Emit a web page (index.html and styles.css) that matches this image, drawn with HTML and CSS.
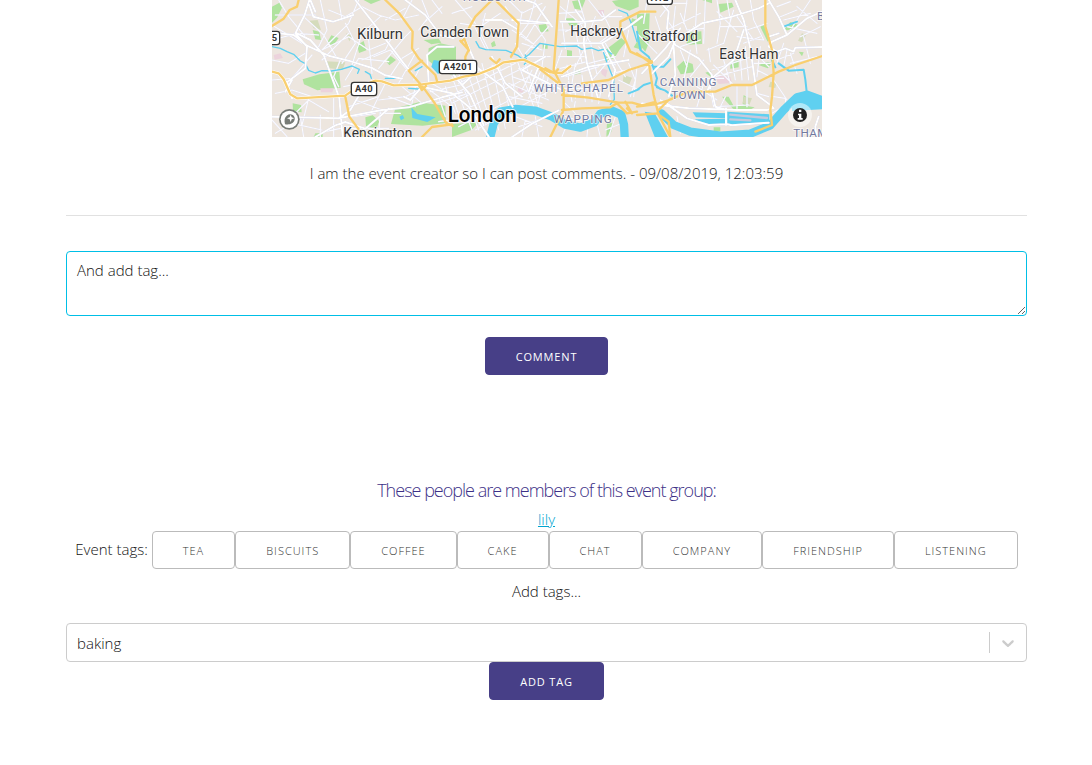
FILE: index.html
```html
<!DOCTYPE html>
<html lang="en">
<head>
<meta charset="utf-8">
<title>Event</title>
<link rel="stylesheet" href="styles.css">
</head>
<body>
<main class="page">
  <svg class="map" viewBox="0 0 1650 411" role="img" aria-label="Map of London">
    <rect class="land" width="1650" height="411"/>
    <!-- parks -->
    <g class="park">
      <path d="M0 20l22-12 8 15-15 30-15 15zM92 238l50-15 60-8 4 48-70 8-40-18zM62 310l25 5 2 22-26-3zM122 90l20 5 5 25-17-2zM165 128l13-22 22 8-17 24zM255 135l20-12 8 28-22 8zM342 184l14-16 16 12-20 16zM280 352l22-6 20 18-10 24-30-10zM130 400h22v11h-27zM275 0h52l-30 12z"/>
      <path d="M370 325l70-18 80 10 2 52-70 8-95-5zM470 145l35-15 47 10v85l-40-5-20-20-25-20zM455 120l45-4 8 12-30 5z"/>
      <path d="M540 145l4 50-4 20h-16v-70zM540 372l80-5-20 22-60 22zM657 130l10-8 5 15-12 5zM900 4l22-4h18l-12 30-20-4zM1020 3l20-3h60v20l-28 12-40-14zM800 75l22-3 8 22-25 3zM880 55l25 0 14 20-25 4zM812 132l15 0v14h-15zM885 150l15 2v18l-15-2zM1000 150l48-36 14 12-20 24-15 25-26 8zM905 212l22-4v12l-20 5zM1005 365l20 5-8 28-14 12zM1080 55l25 8v16l-30-2zM1095 125l15 5v20l-25-8z"/>
      <path d="M1095 42l38-2-3 90-10 25-25-30zM1340 12l40-4 5 12-40 18zM1240 98l48-4 2 38-45 2zM1215 200l20-18 27 10 4 25-40 6zM1300 218l16-5v18zM1375 188l25-8v22l-25 4zM1465 80l10-5 20 35-8 15zM1460 195l28-10 10 5-10 15zM1415 285l12 8v30l-15-12zM1350 290l20 0 15 28 25-2 38 6-20 10-45-6zM1535 90l20-24 28 10-35 15zM1325 382l20 0v12h-20zM1580 155l15 2-5 12zM1290 0h30v10z"/>
    </g>
    <g class="garden"><path d="M112 62l25-2 10 30-22-5zM160 184l60 3-8 22-40-4zM222 100l20 8-10 16zM1055 225l25 8-8 20-20-5zM1590 100l12 5-12 22-12-5zM1415 290l25 5-8 20-20-5zM1495 245l18 3-3 16-20-3z"/></g>
    <g class="pink"><path d="M5 165l20-5 8 14-25 5zM145 265l40 0-4 12-34 0zM740 260l16 5-4 14-15-5zM978 30l18 0v16h-16zM985 205l22 5-6 22-12-10zM1325 226l50 5 5 18-40 3z"/></g>

    <!-- local streets -->
    <g class="street">
      <path d="M0 75L90 130M20 0l30 50 50 60M10 45l120 0M0 120l75-20 65 5M95 50l60 55 40 70M145 0l20 90-25 50M200 0l10 60M260 0l-30 70-80 80M170 30l50 20 50-30 60 30M150 150l80-40 60 40 50-20M210 190l40-60-30-60M230 100l-80 80M240 195l30-95 55-50M270 180l70-30 20-40M220 240l40-65 90 10M300 220l-10-100M320 205l80-95 20-20M350 235l40-60 50-30M380 250l50-90M410 215l-55-65-50 20M0 180l50 10 50-30M0 240l60-5 60-70M10 280l50-10 60 20M60 350l50-50 60 35M85 350l10 61M110 295l-20 80M145 345v66M185 295v115M205 180l-20 50 15 30M215 260l100-20M230 320l90-30 20-40M250 300l80 30M240 350l70-10M300 330l40-80 100 10M320 300l80-10 60-30M325 340l60 0M350 290l80 30M390 260l60 50M420 310l10-50M10 400l50-30 90 20M160 395l70-15M230 385l120 0M325 330l-5 80M0 360l45 50M390 60l30-60M340 60l60-35M320 45l50 15 70-15M450 0l20 50-30 40M480 0l30 40M510 20l-50 45"/>
      <path d="M445 200l-20 40M460 260l80 60M470 245l80 45M475 275l90-20M490 310l100-30M500 290l20 60M520 260l30 80M545 300l20 60M500 365l70-10"/>
    </g>
    <g class="street" transform="translate(540)">
      <path d="M0 40l60-20M10 0l60 70M25 70l60 10 60-40M50 80l-20 40M70 85l30 60M90 60l80 0M100 40l-15 60 25 50M160 20l40 60M170 0l40 40 60-30M200 70l70 0M180 90l60 40M210 35l-10 60 60 50M250 0l-20 70-30 40M240 60l40 60-10 80M280 20l-60 100M290 80l-70 80M210 130l60 20M225 170l70 0M190 130l30 50M320 40l70-5M325 20l60 50 30 60M320 90l80 0M330 65l10 80M350 0l-10 60M380 0l20 65-60 30M370 90l20 100M400 140l-30 60M320 170l80 0M325 205l80-20M330 150l-20 55M345 195l5 45M370 190l-10 60M410 0l40 50 60 0M430 50l-30 80M450 35l30 60M440 130l40-30M415 125l20 100M440 140l50 55M410 190l80-20M425 235l60-70M460 130l60 100M480 220l90-20M500 240l60 30M530 90l-15 80M530 190l20 50-15 50M555 200l-10 90"/>
      <path d="M0 230l60 160M20 220l60 170M45 215l55 155M65 205l60 190M90 190l50 200M120 195l40 190M140 190l40 170M175 180l20 160M195 180l50 140M220 190l40 130M20 250l120-60M10 280l180-90M0 310l220-110M20 340l210-110M20 380l230-120M70 390l210-110M170 250l120 50M180 230l130 45M200 205l90 50M170 290l100 20M240 210l-30 60M265 215l-35 80M275 225l-15 80M290 220l-10 70M305 235l5 45M340 230l100-30M320 265l120 0M350 245l10 60M370 250l0 45M390 225l10 80M420 260v45M450 255l-10 55M470 260l5 45M350 280l110-20M340 310l30 30M370 305l-5 25M340 350l70 20M350 360l-20 50M410 350l-5 60M435 370l10 41M460 390l50-20M470 410l20-60M190 350l80 30M200 380l90-30M220 360l-10 50M250 350l10 60"/>
    </g>
    <g class="street" transform="translate(1095)">
      <path d="M0 100l60 60M30 0l-10 70M55 50l20 60M70 50l30-40 50 0M90 90l100-50M90 60l30 40M115 20l-10 100M130 140l60-20M130 40l20 50 50-5M150 0l-10 70M180 0l-5 90M205 0l-5 130M240 0l10 70-10 60M270 0l10 60M290 30l-30 100M250 80l80 0M240 35l60 60M300 50l50 70M340 0l10 60 30 60M330 90l60-20M300 110l80 10M320 130l50-20M210 150l50-20M170 80l10 80M130 150l20 50M160 150l-20 90M200 180l-40 50M215 145l5 40M225 210l120-40M235 230l110-30M230 195l60 60M260 180l20 70M285 180l10 60M310 170l5 70M335 240l-10-100M350 190l50 0M360 210l40 20M355 160l40 40M370 140l-10 90M180 235l80 0M180 260l60 40M200 250l-20 70M220 270l10 50M265 290l-15 30M300 260l0 65M330 260v60M360 280l35 10M235 320l100-5M410 240l40 60M440 200l10-50M420 180l50-20M460 160l20 60M460 190l80-20M500 110l20 80M420 20l40-15M430 50l50-20M440 60l80-20M450 80l90 20M480 20l60 50M520 0l-60 90M550 80l-60 30M440 130l-20 60M410 290l35 5 2 20-42 25M500 400l50 0M100 395l-10-50M130 400l-10-50"/>
    </g>

    <!-- rivers, docks and canals -->
    <path class="thames" d="M655 411l10-40 20-36 45-8 60 5 50 18 40 24 45 9 42-16 18-26 35-9 28 12 8 30 2 37M1168 340l37 35 50 20 90 12 90-6 60-25 40-46 40-38 30-8 50 18"/>
    <path class="water-fill" d="M1262 337l102 3 0 15-92-3zM1268 358l96-2 0 16-70 0zM1366 335l126 8v28l-126 5zM485 180l16 2 12 30-15 10-20-22zM382 350l10-5 5 10-10 6zM418 322l18 20 55 10-25 14-45-12zM1118 335l30 5 40 71-40 0z"/>
    <path class="dock" d="M1375 344l110 10M1375 358l60 3"/>
    <g class="canal">
      <path d="M0 140l25 5 20 10 20 8 20 20 15 8 10 20 20 8 20-7 28 1 30-5 32-10 22 10-5 12M280 215l14 8 4 12M340 235l30 0M410 265l30 2M430 212l20-12M612 125l10 18 20 6 60 2 35 15 15 12 20-15 32-33 60 10 50-2 15 10 30-4 20 8 20-5 20 15M760 165l5 20-8 8M1040 30l25 10 15 35 15 50M995 158l10 30 12 30 8 20 2 60-12 15"/>
      <path class="canal-wide" d="M1095 95l10 55 25 20 15 35 10 30-5 20 15 12M1145 200l30 0 20-22M1155 262l25 10 20 15M1095 270l20-15 25-8M1070 280l30-12M1520 190l30 22 45-3 5 30 5 45M1500 180l10 22M1535 80l40-15"/>
    </g>
    <path class="thames-head" d="M1560 300l40-28 50 18v38l-90 5z"/>

    <!-- secondary roads -->
    <g class="road">
      <path d="M112 0l-14 45-28 55 35 40-5 65-50 38M112 15l12 35 60 15 60-20M115 0l15 35M0 95l20 5 45 5 40 32 65 30 60 15 70 22 40 22 50 10M75 100l40 20 40 45 35 95 12 35 10 116M250 0l55 70 90 120 25 30M400 0l60 45 45 60 40 10M60 295l-15-50M0 350l200 5 130-25 80-8 100-30 60-15M200 355l35-25 30-50M60 240l-20 35M130 411l60-35 30-10 60 20 70-60M395 290l20 10 35-40 90 20 50 40 60 90M470 245l-5-80 30-25 50 0"/>
      <path d="M545 225l50 60 40 90M580 120l40 90-50 45M640 60l50 0 50 30M612 200l80 60 30 60M660 170l40 80 50 40M720 60l20 0 90 10M760 0l30 10 50 70M820 170l-70 40 130 65M800 200l-30 75M870 230l80-30 120-20M865 65l70 0 55-5 40-30M940 70l-5 60 10 60 35 110M870 130l120 0 80-50 40-30M990 130l40 80-20 80M720 411l60-40 80-40M910 30l30 40"/>
      <path d="M1135 225l55-55 20-50 80-50 90-20 80-25 30-15M1160 0l30 35-5 50 25 50 70 40 40 50-5 40M1110 220l70-75 45-60M1390 0l25 60 20 85 10 70 10 70 40 30 10 10M1415 90l-30 90-60 50-20 45M1205 140l5 85-20 65M1490 0l30 50 25 55-45 20-10 15 25 15 25-10 25 10 5-12 80-2M1520 100l-30 10M1545 105l60-50 45-20M1320 275l10 45 35 10M1110 310l140 15 145 5 90 0 15-5M1195 320l50 35 65 20 55-2 15 3 110-8M1165 300l35 20M1362 325v50M1640 350l-10 30 5 40"/>
    </g>

    <!-- trunk roads -->
    <g class="casing">
      <path d="M0 215l20 5 15 18 20 45 20 12 145-8 30-22 60-23 20 2 35 12 80-2 90-12 40-12 45-8 50-20 25-15 60-8 80 38 35 2 25-20"/>
    </g>
    <g class="trunk">
      <path d="M0 78l35-22 18-26 22-10 5-20M340 0l42 40 40 55-2 50 20 30 50 50 5 18M0 215l20 5 15 18 20 45 20 12 145-8 30-22 60-23 20 2 35 12 80-2 90-12 40-12 45-8 50-20 25-15 60-8 80 38 35 2 25-20M450 182l-40 30 42 48 35 48 35 60 20 10M220 290l12 60 45 61M450 411l30-30 60-8M440 255l10 15 12-12"/>
      <path d="M565 122l25 28-10 20 0 15M590 85l20-35 50-50 20-10M567 125l10-8 14 35M675 5l65 65-5 70-18 30M860 0l-15 210 30 60 0 60-40 81M805 208l65 50M820 205l28 15 10-12M655 175l18 15 10-12M870 285l80 8 90 15 40 0 30 8 40-10M870 330l60-5 85-3 20-12 30 30 30-5M1060 305l20 35-15-15M930 250l80-10 60-30 70-22M1150 35h-45l-60 30 0 20 30 70 65 30M1095 160l35 25 15 100 15 60 35 66M1095 320l60-8 45-15M1095 345l65-5M1160 330l30-30 60-25 80 0 50-20 60 0 80-40 50-20 90-30M1155 340l35 25 5 46M1480 0v80l20 70 5 70-5 70-5 40 5 45-50 20"/>
    </g>

    <!-- place labels -->
    <g class="place">
      <text x="255" y="116" textLength="138" lengthAdjust="spacingAndGlyphs">Kilburn</text>
      <text x="445" y="112" textLength="266" lengthAdjust="spacingAndGlyphs">Camden Town</text>
      <text x="895" y="107" textLength="156" lengthAdjust="spacingAndGlyphs">Hackney</text>
      <text x="1111" y="124" textLength="167" lengthAdjust="spacingAndGlyphs">Stratford</text>
      <text x="1342" y="178" textLength="177" lengthAdjust="spacingAndGlyphs">East Ham</text>
      <text x="214" y="415" textLength="207" lengthAdjust="spacingAndGlyphs">Kensington</text>
    </g>
    <text class="city" x="527" y="365" textLength="207" lengthAdjust="spacingAndGlyphs">London</text>
    <g class="district">
      <text x="572" y="4" textLength="195">HOLLOWAY</text>
      <text x="785" y="276" textLength="268">WHITECHAPEL</text>
      <text x="845" y="368" textLength="174">WAPPING</text>
      <text x="1163" y="259" textLength="170">CANNING</text>
      <text x="1198" y="298" textLength="103">TOWN</text>
      <text x="1564" y="412" textLength="102">THAM</text>
      <text x="1635" y="60">B</text>
    </g>
    <g class="shield">
      <rect x="238" y="247" width="76" height="40" rx="8"/><text x="276" y="277">A40</text>
      <rect x="502" y="181" width="112" height="40" rx="8"/><text x="558" y="211">A4201</text>
      <rect x="1126" y="-27" width="75" height="40" rx="8"/><text x="1163" y="3">A12</text>
      <rect x="-50" y="94" width="73" height="40" rx="8"/><text x="-2" y="124">A5</text>
    </g>
    <g class="logo">
      <circle class="logo-ring" cx="52" cy="358" r="31"/>
      <circle class="logo-face" cx="52" cy="358" r="26"/>
      <path class="logo-mark" d="M39 373c-3-13-1-21 5-26 8-6 17-5 22 2 5 8 1 17-6 21-6 4-13 4-21 3z"/>
      <path class="logo-star" d="M56 344l3 8 8 3-8 3-3 8-3-8-8-3 8-3z"/>
    </g>
    <g class="info">
      <circle class="info-halo" cx="1584" cy="345" r="36"/>
      <circle class="info-disc" cx="1584" cy="345" r="21"/>
      <path class="info-i" d="M1581 329h7v7h-7zM1578 341h10v13h4v5h-15v-5h4v-8h-3z"/>
    </g>
  </svg>

  <p class="comment">I am the event creator so I can post comments. - 09/08/2019, 12:03:59</p>
  <hr class="rule">
  <textarea class="comment-box">And add tag...</textarea>
  <button class="button primary comment-button">COMMENT</button>

  <h2 class="members-title">These people are members of this event group:</h2>
  <a class="member" href="#">lily</a>
  <div class="tags">
    <span class="tags-label">Event tags:</span>
    <button class="button">TEA</button><button class="button">BISCUITS</button><button class="button">COFFEE</button><button class="button">CAKE</button><button class="button">CHAT</button><button class="button">COMPANY</button><button class="button">FRIENDSHIP</button><button class="button">LISTENING</button>
  </div>
  <p class="add-label">Add tags...</p>
  <div class="select">
    <span class="select-value">baking</span>
    <span class="select-separator"></span>
    <span class="select-arrow"><svg width="20" height="20" viewBox="0 0 20 20"><path d="M4.516 7.548c0.436-0.446 1.043-0.481 1.576 0l3.908 3.747 3.908-3.747c0.533-0.481 1.141-0.446 1.574 0 0.436 0.445 0.408 1.197 0 1.615-0.406 0.418-4.695 4.502-4.695 4.502-0.217 0.223-0.502 0.335-0.787 0.335s-0.57-0.112-0.789-0.335c0 0-4.287-4.084-4.695-4.502s-0.436-1.17 0-1.615z"/></svg></span>
  </div>
  <button class="button primary add-button">ADD TAG</button>
</main>
</body>
</html>
```
FILE: styles.css
```css
* { box-sizing: border-box; }
body {
  margin: 0;
  background: #fff;
  color: #111;
  font: 300 15px/24px "Open Sans", sans-serif;
}
.page {
  width: 961px;
  height: 765px;
  margin-left: 66px;
  display: flex;
  flex-direction: column;
  align-items: center;
  overflow: hidden;
}
.page > * { flex-shrink: 0; }

.map { display: block; width: 550px; height: 137px; overflow: hidden; }
.land { fill: #ede6df; }
.park { fill: #b0e39f; }
.garden { fill: #d5dcbc; }
.pink { fill: #ecd3dc; }
.map path { stroke-linejoin: round; stroke-linecap: round; }
.street path { fill: none; stroke: #fafaff; stroke-width: 3.5; }
.street { filter: drop-shadow(0 0 1px #d3d5ea); }
.road path { fill: none; stroke: #fff; stroke-width: 6; }
.road { filter: drop-shadow(0 0 1.5px #b9bde0); }
.thames { fill: none; stroke: #5fd0f0; stroke-width: 25; }
.water-fill, .thames-head { fill: #5fd0f0; }
.dock { fill: none; stroke: #c6c9dd; stroke-width: 7; }
.canal path { fill: none; stroke: #5fd0f0; stroke-width: 4; }
.canal .canal-wide { stroke-width: 6; }
.casing path { fill: none; stroke: #fff; stroke-width: 10; }
.trunk path { fill: none; stroke: #f9cf6f; stroke-width: 7; }
.map text { font-family: Roboto, sans-serif; paint-order: stroke; stroke-linejoin: round; }
.place text { font-size: 43px; font-weight: 400; fill: #333; stroke: #fffc; stroke-width: 5; }
.map .city { font-size: 64px; font-weight: 500; fill: #000; stroke: #fffc; stroke-width: 6; }
.district text { font-size: 35px; font-weight: 400; fill: #72799f; stroke: #fffb; stroke-width: 5; }
.shield rect { fill: #fff; stroke: #333; stroke-width: 4; }
.shield text { font-size: 28px; font-weight: 700; fill: #333; text-anchor: middle; letter-spacing: 1px; }
.logo-ring { fill: #777c77; }
.logo-face { fill: #fff; }
.logo-mark { fill: #777c77; }
.logo-star { fill: #fff; }
.info-halo { fill: #fff; fill-opacity: .5; }
.info-disc { fill: #222; }
.info-i { fill: #fff; }

.comment { margin: 24px 0 0; }
.rule { width: 100%; height: 1px; margin: 30px 0 35px; border: 0; background: #e1e1e1; }
.comment-box {
  display: block;
  width: 100%;
  height: 65px;
  margin: 0 0 21px;
  padding: 6px 10px;
  border: 1px solid #00bfe6;
  border-radius: 4px;
  outline: 0;
  background: #fff;
  color: #111;
  font: inherit;
  resize: vertical;
}
.button {
  height: 38px;
  margin: 0;
  padding: 0 30px;
  border: 1px solid #bbb;
  border-radius: 4px;
  background: #fff;
  color: #333;
  font: 300 11px/38px "Open Sans", sans-serif;
  letter-spacing: 1px;
  white-space: nowrap;
}
.primary { border-color: #473f87; background: #473f87; color: #fff; font-weight: 400; }
.comment-button { width: 123px; padding: 0; margin-bottom: 102px; letter-spacing: .85px; }
.add-button { width: 115px; padding: 0; letter-spacing: .85px; }
.members-title {
  margin: 0;
  color: #3d3187;
  font-size: 18px;
  font-weight: 300;
  line-height: 27px;
  letter-spacing: -.99px;
}
.member { margin-top: 3px; color: #00a5d0; line-height: 24px; text-decoration: underline; height: 24px; }
.tags { display: flex; height: 38px; align-items: center; }
.tags-label { margin: -2px 4px 0 0; }
.add-label { margin: 10px 0 20px; }
.select {
  display: flex;
  align-items: center;
  width: 100%;
  height: 39px;
  border: 1px solid #ccc;
  border-radius: 4px;
}
.select-value { flex: 1; padding-left: 10px; }
.select-separator { width: 1px; height: 21px; background: #ccc; }
.select-arrow { display: flex; padding: 8px; fill: #ccc; }
```
